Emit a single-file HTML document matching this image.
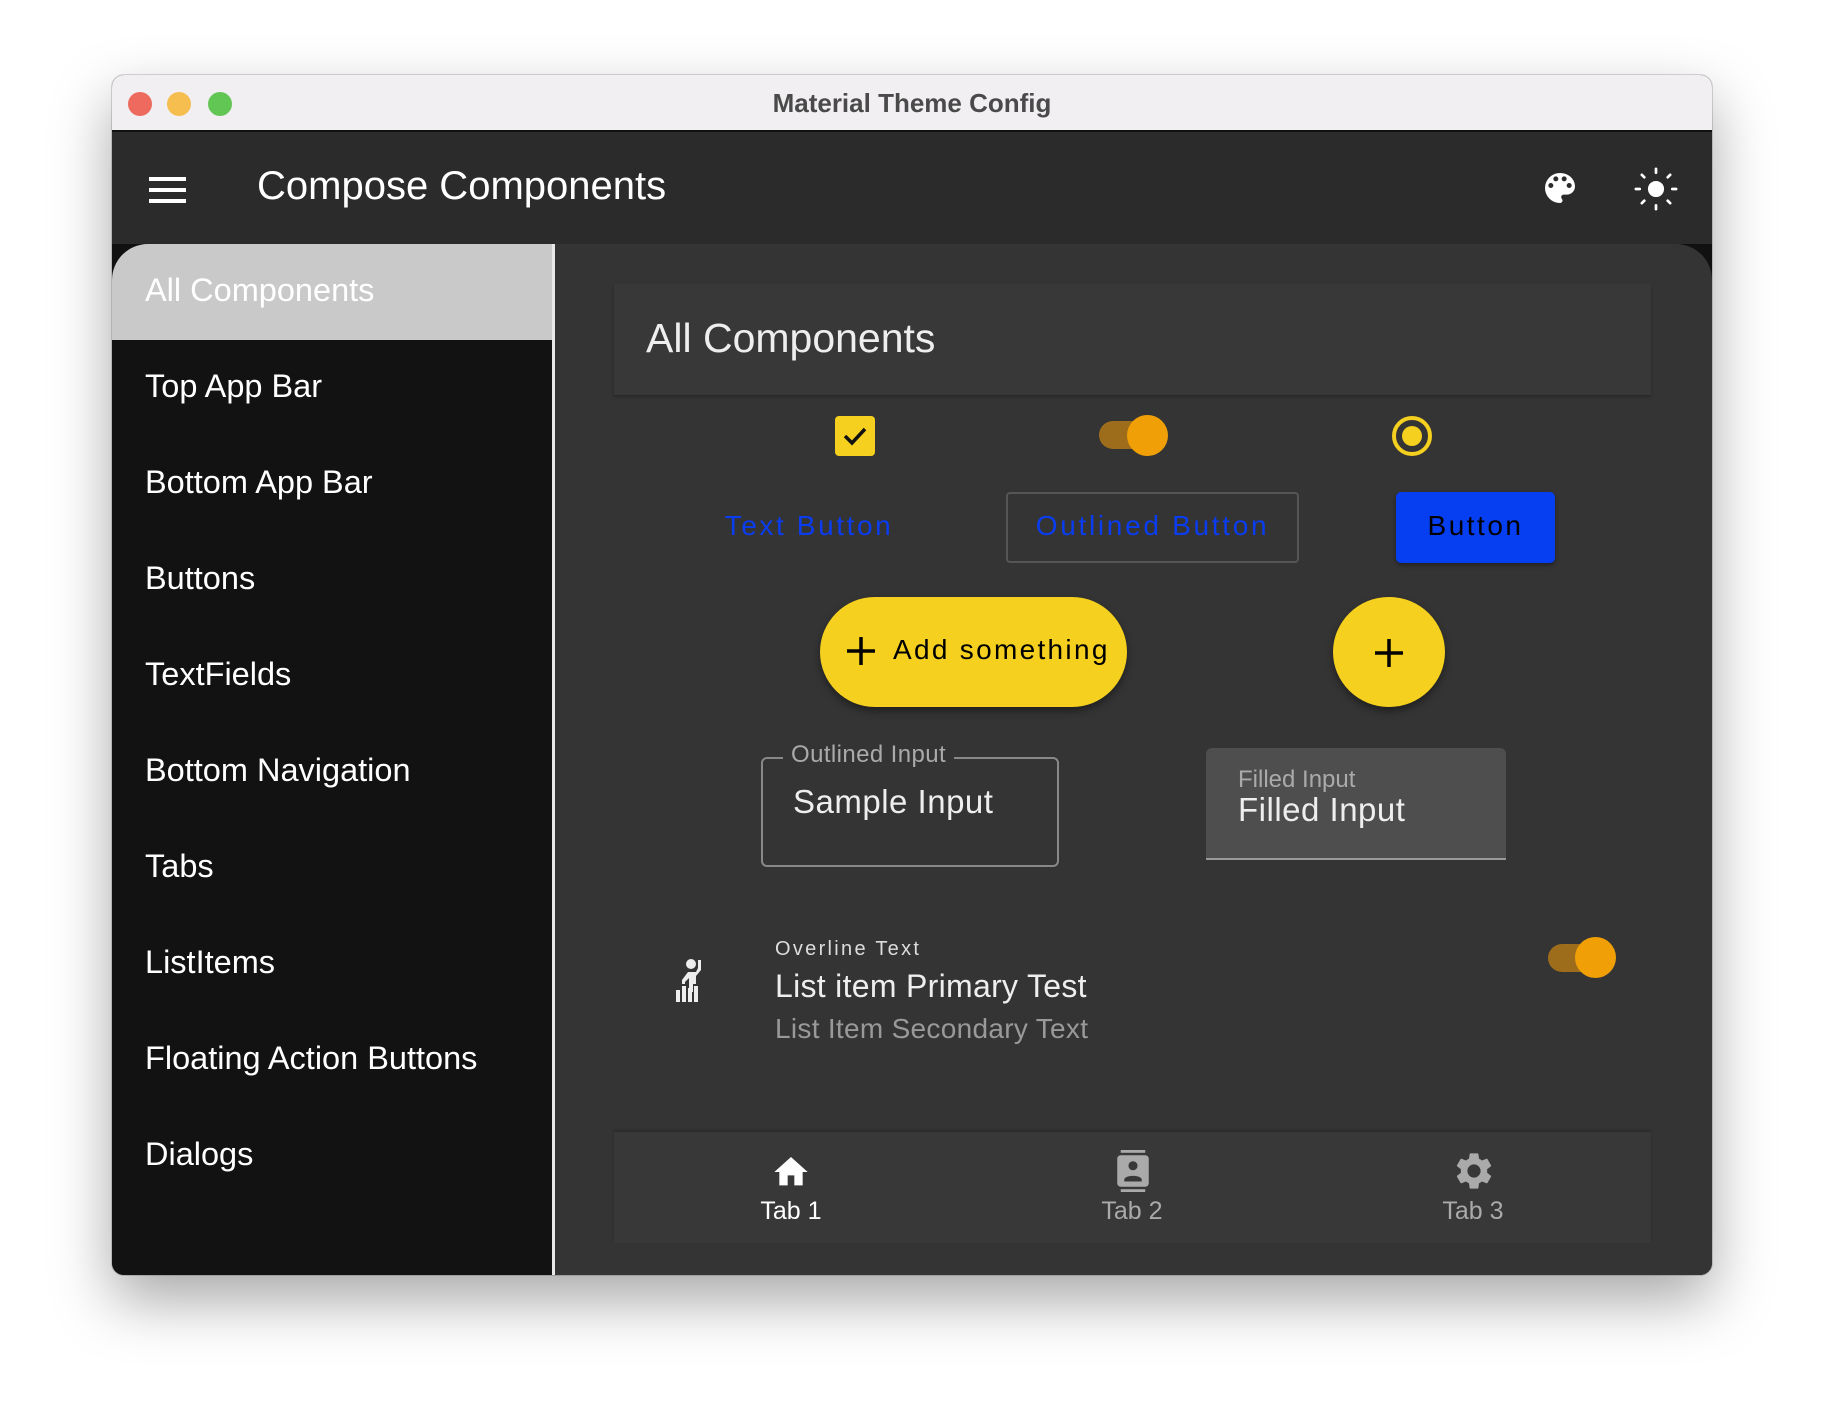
<!DOCTYPE html>
<html><head><meta charset="utf-8"><style>
*{margin:0;padding:0;box-sizing:border-box}
body{width:1824px;height:1424px;background:#fff;font-family:"Liberation Sans",sans-serif;position:relative;overflow:hidden}
.a{position:absolute}
.win{left:112px;top:75px;width:1600px;height:1200px;border-radius:12px;overflow:hidden;background:#111;box-shadow:0 25px 60px rgba(0,0,0,.35),0 0 0 1px rgba(0,0,0,.15)}
.tb{left:0;top:0;width:1600px;height:57px;background:#f1eff2;border-bottom:2px solid #111}
.dot{width:24px;height:24px;border-radius:50%;top:17px}
.t{white-space:nowrap}
.side{color:#fff;font-size:32.5px;left:33px}
</style></head><body>
<div class="a win">
 <div class="a tb">
  <div class="a dot" style="left:16px;background:#ee6a5f"></div>
  <div class="a dot" style="left:55px;background:#f5be4f"></div>
  <div class="a dot" style="left:96px;background:#62c655"></div>
  <div class="a t" style="left:0;width:1600px;text-align:center;top:13px;font-size:26px;font-weight:bold;color:#4a4a4a">Material Theme Config</div>
 </div>
 <div class="a" style="left:0;top:57px;width:1600px;height:112px;background:#2b2b2b"></div>
 <div class="a" style="left:37px;top:102px;width:37px;height:4px;background:#fff;box-shadow:0 11px 0 #fff,0 22px 0 #fff"></div>
 <div class="a t" style="left:145px;top:89px;font-size:40px;color:#fff">Compose Components</div>
 <svg class="a" style="left:1428px;top:93px" width="40" height="40" viewBox="0 0 24 24"><path fill="#fff" d="M12 3a9 9 0 0 0 0 18c.83 0 1.5-.67 1.5-1.5 0-.39-.15-.74-.39-1.010-.23-.26-.38-.61-.38-.99 0-.83.67-1.5 1.5-1.5H16c2.760 0 5-2.24 5-5 0-4.42-4.03-8-9-8zm-5.5 9a1.5 1.5 0 1 1 0-3 1.5 1.5 0 0 1 0 3zm3-4a1.5 1.5 0 1 1 0-3 1.5 1.5 0 0 1 0 3zm5 0a1.5 1.5 0 1 1 0-3 1.5 1.5 0 0 1 0 3zm3 4a1.5 1.5 0 1 1 0-3 1.5 1.5 0 0 1 0 3z"/></svg>
 <svg class="a" style="left:1521px;top:91px" width="46" height="46" viewBox="0 0 24 24"><circle cx="12" cy="12" r="4.2" fill="#fff"/><g stroke="#fff" stroke-width="1.4" stroke-linecap="round"><path d="M12 1.5v2M12 20.5v2M1.5 12h2M20.5 12h2M4.6 4.6l1.3 1.3M18.1 18.1l1.3 1.3M4.6 19.4l1.3-1.3M18.1 5.9l1.3-1.3"/></g></svg>
 <div class="a" style="left:0;top:169px;width:440px;height:1031px;background:#121212;border-top-left-radius:36px;overflow:hidden">
  <div class="a" style="left:0;top:0;width:440px;height:96px;background:#c9c9c9"></div>
 </div>
 <div class="a" style="left:440px;top:169px;width:3px;height:1031px;background:#e8e8e8"></div>
 <div class="a t side" style="top:197px">All Components</div>
 <div class="a t side" style="top:293px">Top App Bar</div>
 <div class="a t side" style="top:389px">Bottom App Bar</div>
 <div class="a t side" style="top:485px">Buttons</div>
 <div class="a t side" style="top:581px">TextFields</div>
 <div class="a t side" style="top:677px">Bottom Navigation</div>
 <div class="a t side" style="top:773px">Tabs</div>
 <div class="a t side" style="top:869px">ListItems</div>
 <div class="a t side" style="top:965px">Floating Action Buttons</div>
 <div class="a t side" style="top:1061px">Dialogs</div>
 <div class="a" style="left:443px;top:169px;width:1157px;height:1031px;background:#343434;border-top-right-radius:36px"></div>
 <div class="a" style="left:502px;top:209px;width:1037px;height:111px;background:#383838;box-shadow:0 2px 3px rgba(0,0,0,.25)"></div>
 <div class="a t" style="left:534px;top:240px;font-size:41px;color:#eee">All Components</div>
 <div class="a" style="left:723px;top:341px;width:40px;height:40px;border-radius:4px;background:#f5d01e"></div>
 <svg class="a" style="left:723px;top:341px" width="40" height="40"><path d="M10 20l7 7 13-14" stroke="#111" stroke-width="3.5" fill="none"/></svg>
 <div class="a" style="left:987px;top:346px;width:62px;height:28px;border-radius:14px;background:#9e6d1b"></div>
 <div class="a" style="left:1015px;top:340px;width:41px;height:41px;border-radius:50%;background:#f0a006"></div>
 <div class="a" style="left:1280px;top:341px;width:40px;height:40px;border-radius:50%;border:4px solid #f5d01e"></div>
 <div class="a" style="left:1290px;top:351px;width:20px;height:20px;border-radius:50%;background:#f5d01e"></div>
 <div class="a t" style="left:577px;top:435px;width:240px;text-align:center;font-size:28px;color:#0a3cf0;letter-spacing:2.6px">Text Button</div>
 <div class="a" style="left:894px;top:417px;width:293px;height:71px;border:2px solid #555;border-radius:4px"></div>
 <div class="a t" style="left:874px;top:435px;width:333px;text-align:center;font-size:28px;color:#0a3cf0;letter-spacing:2.7px">Outlined Button</div>
 <div class="a" style="left:1284px;top:417px;width:159px;height:71px;background:#063ef2;border-radius:5px;box-shadow:0 2px 4px rgba(0,0,0,.4)"></div>
 <div class="a t" style="left:1284px;top:435px;width:159px;text-align:center;font-size:28px;color:#000;letter-spacing:2.5px">Button</div>
 <div class="a" style="left:708px;top:522px;width:307px;height:110px;border-radius:55px;background:#f5d01e;box-shadow:0 4px 8px rgba(0,0,0,.4)"></div>
 <svg class="a" style="left:733px;top:558px" width="32" height="36"><path d="M16 4v28M2 18h28" stroke="#000" stroke-width="3.5"/></svg>
 <div class="a t" style="left:781px;top:559px;font-size:28px;color:#000;letter-spacing:2.3px">Add something</div>
 <div class="a" style="left:1221px;top:522px;width:112px;height:110px;border-radius:50%;background:#f5d01e;box-shadow:0 4px 8px rgba(0,0,0,.4)"></div>
 <svg class="a" style="left:1261px;top:560px" width="32" height="36"><path d="M16 4v28M2 18h28" stroke="#000" stroke-width="3.5"/></svg>
 <div class="a" style="left:649px;top:682px;width:298px;height:110px;border:2px solid #888;border-radius:6px"></div>
 <div class="a t" style="left:671px;top:666px;padding:0 8px;background:#343434;font-size:24px;color:#aaa;letter-spacing:.4px">Outlined Input</div>
 <div class="a t" style="left:681px;top:708px;font-size:33px;color:#eee;letter-spacing:.5px">Sample Input</div>
 <div class="a" style="left:1094px;top:673px;width:300px;height:112px;background:#4e4e4e;border-radius:6px 6px 0 0;border-bottom:2px solid #999"></div>
 <div class="a t" style="left:1126px;top:691px;font-size:24px;color:#aaa">Filled Input</div>
 <div class="a t" style="left:1126px;top:716px;font-size:33px;color:#eee;letter-spacing:.5px">Filled Input</div>
 <svg class="a" style="left:562px;top:883px" width="34" height="44" viewBox="0 0 34 44"><circle cx="17" cy="6" r="5" fill="#eee"/><path d="M27 2v10l-5 6v8h-3v8h-4V20l-4 4v2H8v-4l6-8h8l2-4V2z" fill="#eee"/><rect x="2" y="32" width="4" height="12" fill="#eee"/><rect x="8" y="28" width="4" height="16" fill="#eee"/><rect x="14" y="30" width="4" height="14" fill="#eee"/><rect x="20" y="28" width="4" height="16" fill="#eee"/></svg>
 <div class="a t" style="left:663px;top:863px;font-size:20px;color:#ddd;letter-spacing:2.3px">Overline Text</div>
 <div class="a t" style="left:663px;top:893px;font-size:32px;color:#eee;letter-spacing:.3px">List item Primary Test</div>
 <div class="a t" style="left:663px;top:938px;font-size:28px;color:#999;letter-spacing:.3px">List Item Secondary Text</div>
 <div class="a" style="left:1436px;top:869px;width:62px;height:28px;border-radius:14px;background:#9e6d1b"></div>
 <div class="a" style="left:1463px;top:862px;width:41px;height:41px;border-radius:50%;background:#f0a006"></div>
 <div class="a" style="left:502px;top:1057px;width:1037px;height:111px;background:#383838;box-shadow:0 -2px 3px rgba(0,0,0,.2)"></div>
 <svg class="a" style="left:659px;top:1077px" width="40" height="40" viewBox="0 0 24 24"><path d="M10 20v-6h4v6h5v-8h3L12 3 2 12h3v8z" fill="#fff"/></svg>
 <div class="a t" style="left:619px;top:1122px;width:120px;text-align:center;font-size:25px;color:#fff">Tab 1</div>
 <svg class="a" style="left:1000px;top:1073px" width="42" height="46" viewBox="0 0 24 26"><rect x="5" y="1" width="14" height="1.6" fill="#aaa"/><rect x="5" y="23.4" width="14" height="1.6" fill="#aaa"/><rect x="3" y="4" width="18" height="18" rx="2" fill="#aaa"/><circle cx="12" cy="10" r="2.6" fill="#383838"/><path d="M7 18c0-3 10-3 10 0v1H7z" fill="#383838"/></svg>
 <div class="a t" style="left:960px;top:1122px;width:120px;text-align:center;font-size:25px;color:#aaa">Tab 2</div>
 <svg class="a" style="left:1340px;top:1074px" width="44" height="44" viewBox="0 0 24 24"><path fill="#aaa" d="M19.14 12.94c.04-.3.06-.61.06-.94 0-.32-.02-.64-.07-.94l2.03-1.58a.49.49 0 0 0 .12-.61l-1.92-3.32a.488.488 0 0 0-.59-.22l-2.39.96c-.5-.38-1.030-.7-1.62-.94l-.36-2.54a.484.484 0 0 0-.48-.41h-3.84c-.24 0-.43.17-.47.41l-.36 2.54c-.59.24-1.13.57-1.62.94l-2.39-.96c-.22-.08-.47 0-.59.22L2.74 8.87c-.12.21-.08.47.12.61l2.03 1.58c-.05.3-.09.63-.09.94s.02.64.07.94l-2.03 1.58a.49.49 0 0 0-.12.61l1.92 3.32c.12.22.37.29.59.22l2.39-.96c.5.38 1.030.7 1.62.94l.36 2.54c.05.24.24.41.48.41h3.84c.24 0 .44-.17.47-.41l.36-2.54c.59-.24 1.13-.56 1.62-.94l2.39.96c.22.08.47 0 .59-.22l1.92-3.32c.12-.22.07-.47-.12-.61l-2.01-1.58zM12 15.6c-1.98 0-3.6-1.62-3.6-3.6s1.62-3.6 3.6-3.6 3.6 1.620 3.6 3.6-1.62 3.6-3.6 3.6z"/></svg>
 <div class="a t" style="left:1301px;top:1122px;width:120px;text-align:center;font-size:25px;color:#aaa">Tab 3</div>
</div>
</body></html>
